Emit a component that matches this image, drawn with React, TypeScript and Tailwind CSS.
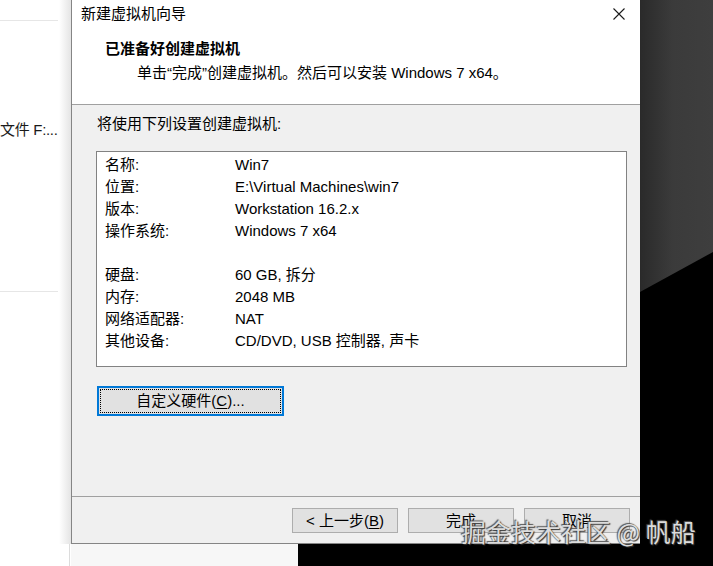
import React from "react";

const F = "font-['Liberation_Sans','Noto_Sans_CJK_SC',sans-serif]";

function Row({ label, value }: { label: string; value: string }) {
  return (
    <div className="flex h-[22px] items-center">
      <div className="w-[138px] pl-[8px]">{label}</div>
      <div>{value}</div>
    </div>
  );
}

function Btn({ children }: { children: React.ReactNode }) {
  return (
    <div className="flex h-[25px] w-[106px] items-center justify-center border border-[#adadad] bg-[#e1e1e1] text-[15px] text-black">
      {children}
    </div>
  );
}

export default function App() {
  return (
    <div className={`${F} relative flex h-[566px] w-[713px] overflow-hidden bg-white text-[15px] leading-[20px] text-black`}>
      {/* left background window */}
      <div className="relative flex w-[71px] shrink-0 flex-col bg-white">
        <div className="mt-[20px] h-px w-[58px] bg-[#e6e6e6]" />
        <div className="mt-[99px] h-[20px] whitespace-nowrap tracking-[-0.3px] text-[#1a1a1a]">文件 F:...</div>
        <div className="mt-[151px] h-px w-[58px] bg-[#e6e6e6]" />
        <div className="absolute right-0 top-0 h-[544px] w-[12px] bg-gradient-to-r from-transparent to-[#e4e4e4]" />
        <div className="absolute bottom-0 left-[69px] h-[22px] w-px bg-[#dcdcdc]" />
      </div>

      {/* dialog column */}
      <div className="flex w-[569px] shrink-0 flex-col">
        <div className="flex h-[544px] flex-col border-b border-l border-[#858585] bg-[#f0f0f0]">
          {/* header */}
          <div className="flex h-[105px] flex-col border-b border-[#a0a0a0] bg-white">
            <div className="flex h-[28px] items-center justify-between pl-[9px] pr-[15px]">
              <span>新建虚拟机向导</span>
              <svg width="12" height="12" viewBox="0 0 12 12" className="mt-[-1px]">
                <path d="M0.5 0.5 L11.5 11.5 M11.5 0.5 L0.5 11.5" stroke="#1a1a1a" strokeWidth="1.1" fill="none" />
              </svg>
            </div>
            <div className="mt-[11px] pl-[33px] font-bold">已准备好创建虚拟机</div>
            <div className="mt-[4px] pl-[65px]">单击“完成”创建虚拟机。然后可以安装 Windows 7 x64。</div>
          </div>

          {/* body */}
          <div className="flex flex-1 flex-col pl-[24px]">
            <div className="mt-[9px] pl-[1px]">将使用下列设置创建虚拟机:</div>
            <div className="mt-[17px] h-[216px] w-[531px] border border-[#828282] bg-white pt-[2px]">
              <Row label="名称:" value="Win7" />
              <Row label="位置:" value="E:\Virtual Machines\win7" />
              <Row label="版本:" value="Workstation 16.2.x" />
              <Row label="操作系统:" value="Windows 7 x64" />
              <div className="h-[22px]" />
              <Row label="硬盘:" value="60 GB, 拆分" />
              <Row label="内存:" value="2048 MB" />
              <Row label="网络适配器:" value="NAT" />
              <Row label="其他设备:" value="CD/DVD, USB 控制器, 声卡" />
            </div>
            <div className="ml-[1px] mt-[19px] h-[30px] w-[187px] border-2 border-[#0078d7] bg-[#e1e1e1] p-px">
              <div className="flex h-full items-center justify-center border border-dotted border-black">
                自定义硬件(<span className="underline underline-offset-2">C</span>)...
              </div>
            </div>
          </div>

          {/* footer */}
          <div className="flex h-[47px] justify-end gap-[10px] border-t border-[#a0a0a0] pr-[10px] pt-[11px]">
            <Btn>
              &lt; 上一步(<span className="underline underline-offset-2">B</span>)
            </Btn>
            <Btn>完成</Btn>
            <Btn>取消</Btn>
          </div>
        </div>
        <div className="flex h-[22px]">
          <div className="w-[227px] bg-[#f7f7f7]" />
          <div className="flex-1 bg-black" />
        </div>
      </div>

      {/* right dark desktop */}
      <div className="relative flex-1 bg-[linear-gradient(to_right,#2a2a2a,#3b3b3b_45%,#3e3e3e)]">
        <div className="absolute inset-0 bg-black [clip-path:polygon(0_292px,100%_252px,100%_100%,0_100%)]" />
      </div>

      {/* watermark */}
      <div className="absolute left-[461px] top-[515px] whitespace-nowrap font-['Noto_Sans_CJK_SC',sans-serif] text-[25px] leading-[32px] text-[#dcdcdc] [text-shadow:1px_1px_1px_#333,-1px_-1px_1px_#555]">
        掘金技术社区 @ 帆船
      </div>
    </div>
  );
}
